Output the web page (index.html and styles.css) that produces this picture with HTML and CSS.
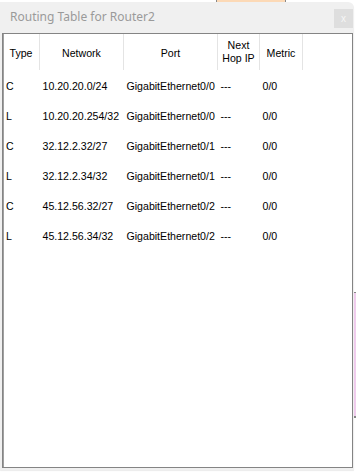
FILE: index.html
```html
<!DOCTYPE html>
<html>
<head>
<meta charset="utf-8">
<link rel="stylesheet" href="styles.css">
</head>
<body>
<div class="desk">
  <div class="bg-peach"></div>
  <div class="bg-pink"></div>
  <div class="bg-teal"></div>
  <div class="window">
    <div class="titlebar">
      <span class="title">Routing Table for Router2</span>
      <span class="close">x</span>
    </div>
    <div class="panel">
      <table class="rt">
        <thead>
          <tr>
            <th class="c-type">Type</th>
            <th class="c-net">Network</th>
            <th class="c-port">Port</th>
            <th class="c-hop">Next<br>Hop IP</th>
            <th class="c-met">Metric</th>
            <th class="c-rest"></th>
          </tr>
        </thead>
        <tbody>
          <tr><td>C</td><td>10.20.20.0/24</td><td>GigabitEthernet0/0</td><td>---</td><td>0/0</td><td></td></tr>
          <tr><td>L</td><td>10.20.20.254/32</td><td>GigabitEthernet0/0</td><td>---</td><td>0/0</td><td></td></tr>
          <tr><td>C</td><td>32.12.2.32/27</td><td>GigabitEthernet0/1</td><td>---</td><td>0/0</td><td></td></tr>
          <tr><td>L</td><td>32.12.2.34/32</td><td>GigabitEthernet0/1</td><td>---</td><td>0/0</td><td></td></tr>
          <tr><td>C</td><td>45.12.56.32/27</td><td>GigabitEthernet0/2</td><td>---</td><td>0/0</td><td></td></tr>
          <tr><td>L</td><td>45.12.56.34/32</td><td>GigabitEthernet0/2</td><td>---</td><td>0/0</td><td></td></tr>
        </tbody>
      </table>
    </div>
  </div>
</div>
</body>
</html>
```
FILE: styles.css
```css
html, body {
  margin: 0;
  padding: 0;
  background: #ffffff;
}
.desk {
  position: relative;
  width: 356px;
  height: 472px;
  overflow: hidden;
  background: #ffffff;
}
.bg-peach {
  position: absolute;
  left: 216px;
  top: 0;
  width: 68px;
  height: 4px;
  background: #fcd9b6;
  border-left: 1px solid #888;
  border-right: 1px solid #888;
}
.bg-pink {
  position: absolute;
  left: 350px;
  top: 292px;
  width: 6px;
  height: 123px;
  background: #f1cdee;
  border-top: 1px solid #888;
  border-bottom: 2px solid #888;
}
.bg-teal {
  position: absolute;
  left: 0;
  top: 300px;
  width: 2px;
  height: 95px;
  background: #bfe3e0;
}
.window {
  position: absolute;
  left: 0;
  top: 2px;
  width: 354px;
  height: 468px;
  background: #f0f0f0;
  border-top-right-radius: 6px;
  display: flex;
  flex-direction: column;
  padding: 0 1px 2px 2px;
  box-sizing: border-box;
  box-shadow: 0 1px 1px rgba(0,0,0,0.08);
}
.titlebar {
  height: 31px;
  display: flex;
  align-items: center;
  justify-content: space-between;
  padding: 0 0 0 8px;
}
.title {
  font-family: "Noto Sans", "Open Sans", sans-serif;
  font-size: 12px;
  color: #9a9a9a;
  position: relative;
  top: -1px;
}
.close {
  width: 19px;
  height: 19px;
  background: #dedede;
  color: #f6f6f6;
  font-family: "Liberation Sans", sans-serif;
  font-size: 10px;
  display: flex;
  align-items: center;
  justify-content: center;
  position: relative;
  top: 1px;
}
.panel {
  flex: 1;
  background: #ffffff;
  border: 1px solid #848484;
  box-shadow: inset 1px 0 0 #a0a0a0;
}
.rt {
  border-collapse: collapse;
  font-family: "Liberation Sans", Arial, sans-serif;
  font-size: 10.6px;
  color: #000;
  table-layout: fixed;
}
.rt th {
  font-weight: normal;
  height: 34px;
  padding: 2px 0 0 0;
  text-align: center;
  vertical-align: middle;
  line-height: 13px;
  border-right: 1px solid #e4e4e4;
}
.rt th.c-hop {
  height: 36px;
  padding-top: 0;
}
.rt th.c-rest { border-right: none; }
.c-type { width: 36px; }
.c-net { width: 83px; }
.c-port { width: 93px; }
.c-hop { width: 41px; }
.c-met { width: 42px; }
.rt td {
  height: 30px;
  padding: 0 0 0 3px;
  white-space: nowrap;
  vertical-align: middle;
}
.rt tbody tr:first-child td { height: 31px; }
```
